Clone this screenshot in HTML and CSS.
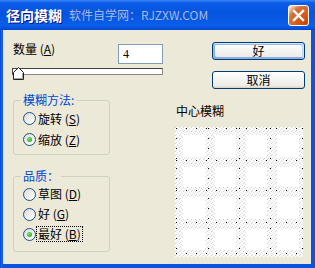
FILE: index.html
```html
<!DOCTYPE html>
<html lang="zh-CN">
<head>
<meta charset="utf-8">
<link rel="stylesheet" href="styles.css">
</head>
<body>
<div class="win">
  <div class="titlebar">
    <span class="title">径向模糊</span>
    <span class="watermark">软件自学网：RJZXW.COM</span>
    <span class="close">
      <svg width="21" height="21" viewBox="0 0 21 21"><path d="M6 6 L15 15 M15 6 L6 15" stroke="#fff" stroke-width="2.4" stroke-linecap="square"/></svg>
    </span>
  </div>
  <div class="frame">
    <div class="client">
      <div class="left">
        <div class="amount-row">
          <span class="label">数量 (<u>A</u>)</span>
          <input class="num" type="text" value="4">
        </div>
        <div class="slider">
          <div class="track"></div>
          <svg class="thumb" width="11" height="13" viewBox="0 0 11 13"><path d="M5.5 0.5 L10.5 5.5 L10.5 12.5 L0.5 12.5 L0.5 5.5 Z" fill="#fff" stroke="#222"/><path d="M1.5 11.5 L9.5 11.5 L9.5 6" fill="none" stroke="#a0a0a0"/></svg>
        </div>
        <fieldset class="group g1">
          <legend>模糊方法:</legend>
          <div class="radio-row"><span class="radio"></span><span class="rtext">旋转 (<u>S</u>)</span></div>
          <div class="radio-row"><span class="radio on"></span><span class="rtext">缩放 (<u>Z</u>)</span></div>
        </fieldset>
        <fieldset class="group g2">
          <legend>品质：</legend>
          <div class="radio-row"><span class="radio"></span><span class="rtext">草图 (<u>D</u>)</span></div>
          <div class="radio-row"><span class="radio"></span><span class="rtext">好 (<u>G</u>)</span></div>
          <div class="radio-row"><span class="radio on"></span><span class="rtext focus">最好 (<u>B</u>)</span></div>
        </fieldset>
      </div>
      <div class="right">
        <button class="btn default">好</button>
        <button class="btn">取消</button>
        <div class="center-label">中心模糊</div>
        <div class="preview">
          <svg width="128" height="130" viewBox="0 0 128 130">
            <defs>
              <pattern id="sp" width="4" height="4" patternUnits="userSpaceOnUse">
                <rect width="4" height="4" fill="#fbfbfb"/>
                <rect x="0" y="0" width="1" height="1" fill="#d2d2d2"/>
                <rect x="2" y="1" width="1" height="1" fill="#e2e2e2"/>
                <rect x="1" y="3" width="1" height="1" fill="#dadada"/>
                <rect x="3" y="2" width="1" height="1" fill="#e6e6e6"/>
              </pattern>
            </defs>
            <rect width="128" height="130" fill="url(#sp)"/>
            <g fill="#fff">
              <rect x="8" y="8" width="22" height="22"/><rect x="40" y="8" width="21" height="22"/><rect x="71" y="8" width="21" height="22"/><rect x="102" y="8" width="22" height="22"/>
              <rect x="8" y="40" width="22" height="20"/><rect x="40" y="40" width="21" height="20"/><rect x="71" y="40" width="21" height="20"/><rect x="102" y="40" width="22" height="20"/>
              <rect x="8" y="70" width="22" height="22"/><rect x="40" y="70" width="21" height="22"/><rect x="71" y="70" width="21" height="22"/><rect x="102" y="70" width="22" height="22"/>
              <rect x="8" y="102" width="22" height="21"/><rect x="40" y="102" width="21" height="21"/><rect x="71" y="102" width="21" height="21"/><rect x="102" y="102" width="22" height="21"/>
            </g>
            <g stroke="#000" stroke-width="1" stroke-dasharray="1 9">
              <path d="M1.5 1 V128 M33.5 1 V128 M64.5 1 V128 M95.5 1 V128 M127.5 1 V128"/>
              <path d="M1 1.5 H128 M1 33.5 H128 M1 63.5 H128 M1 95.5 H128 M1 126.5 H128"/>
            </g>
          </svg>
        </div>
      </div>
    </div>
  </div>
</div>
</body>
</html>
```
FILE: styles.css
```css
* { box-sizing: border-box; }
html, body { margin: 0; padding: 0; }
body {
  width: 315px;
  height: 268px;
  overflow: hidden;
  font-family: "Noto Sans CJK SC", "Noto Sans", sans-serif;
  font-size: 12px;
  color: #000;
  background: #0a4fd6;
}
.win {
  width: 315px;
  height: 268px;
  display: flex;
  flex-direction: column;
}
.titlebar {
  height: 30px;
  flex: none;
  display: flex;
  align-items: center;
  padding: 0 6px 0 6px;
  background: linear-gradient(180deg, #3a86f4 0, #0a5ce8 10%, #0554e0 45%, #0a5ee8 85%, #0650dd 95%, #0443c8 100%);
}
.title {
  color: #fff;
  font-weight: bold;
  font-size: 14px;
  line-height: 16px;
  text-shadow: 1px 1px #0f1089;
}
.watermark {
  margin-left: 7px;
  color: #a9b8dc;
  font-size: 12px;
  line-height: 16px;
}
.close {
  margin-left: auto;
  width: 21px;
  height: 21px;
  border: 1px solid #fff;
  border-radius: 3px;
  background: radial-gradient(circle at 90% 90%, #cc4600 0, #dc6527 55%, #cd7546 70%, #ffccb2 90%, #fff 100%);
  display: flex;
  align-items: center;
  justify-content: center;
}
.close svg { display: block; margin: -1px; }
.frame {
  flex: 1;
  display: flex;
  padding: 0 4px 4px 3px;
  background: linear-gradient(90deg, #0831c9 0, #166aee 1px, #0a55e0 3px);
}
.client {
  flex: 1;
  background: #ece9d8;
  display: flex;
  gap: 12px;
  padding: 12px 0 0 10px;
}
.left {
  width: 150px;
  display: flex;
  flex-direction: column;
}
.amount-row {
  display: flex;
  justify-content: space-between;
  align-items: flex-start;
  height: 22px;
}
.label {
  line-height: 14px;
}
.num {
  width: 45px;
  height: 20px;
  margin: 2px 0 0 0;
  border: 1px solid #7f9db9;
  padding: 0 0 0 4px;
  font-family: "Liberation Serif", serif;
  font-size: 12px;
  background: #fff;
  outline: none;
}
.slider {
  position: relative;
  margin: 4px 0 0 -1px;
  width: 151px;
  height: 12px;
}
.track {
  height: 7px;
  background: #fff;
  border: 1px solid #444;
  border-right-color: #888;
  border-bottom-color: #888;
}
.thumb {
  position: absolute;
  left: 1px;
  top: -1px;
}
.group {
  margin: 0;
  padding: 0;
  border: 1px solid #d0d0bf;
  border-radius: 3px;
  width: 97px;
}
.group legend {
  margin-left: 7px;
  padding: 0 2px;
  color: #0046d5;
  line-height: 14px;
}
.g1 {
  margin-top: 13px;
  height: 62px;
  padding-top: 1px;
}
.g2 {
  margin-top: 14px;
  height: 83px;
  padding-top: 1px;
}
.radio-row {
  display: flex;
  align-items: center;
  height: 21px;
  padding-left: 9px;
}
.g2 .radio-row { height: 20px; }
.radio {
  width: 13px;
  height: 13px;
  border-radius: 50%;
  border: 1px solid #1c5180;
  background: linear-gradient(135deg, #dcdcd7, #fff);
  display: flex;
  align-items: center;
  justify-content: center;
  flex: none;
}
.radio.on::after {
  content: "";
  width: 5px;
  height: 5px;
  border-radius: 50%;
  background: radial-gradient(circle at 35% 35%, #6fe36f, #21a121);
}
.rtext {
  margin-left: 2px;
  line-height: 14px;
}
.rtext.focus {
  outline: 1px dotted #000;
  outline-offset: 0;
  padding: 0 1px;
  margin-left: 1px;
}
.right {
  width: 130px;
  display: flex;
  flex-direction: column;
}
.btn {
  align-self: flex-end;
  width: 93px;
  height: 18px;
  padding: 0;
  font-family: inherit;
  font-size: 12px;
  line-height: 14px;
  color: #000;
  border: 1px solid #003c74;
  border-radius: 3px;
  background: linear-gradient(180deg, #fff, #ecebe6 86%, #d6d0c5);
}
.btn + .btn { margin-top: 11px; }
.btn.default {
  box-shadow: inset -1px 1px #cee7ff, inset 1px 2px #98b8ea, inset -2px 2px #bcd4f6, inset 1px -1px #89ade4, inset 2px -2px #89ade4;
}
.center-label {
  margin-top: 15px;
  margin-left: 1px;
  line-height: 14px;
}
.preview {
  margin-top: 9px;
  width: 128px;
  height: 130px;
}
.preview svg { display: block; }
```
